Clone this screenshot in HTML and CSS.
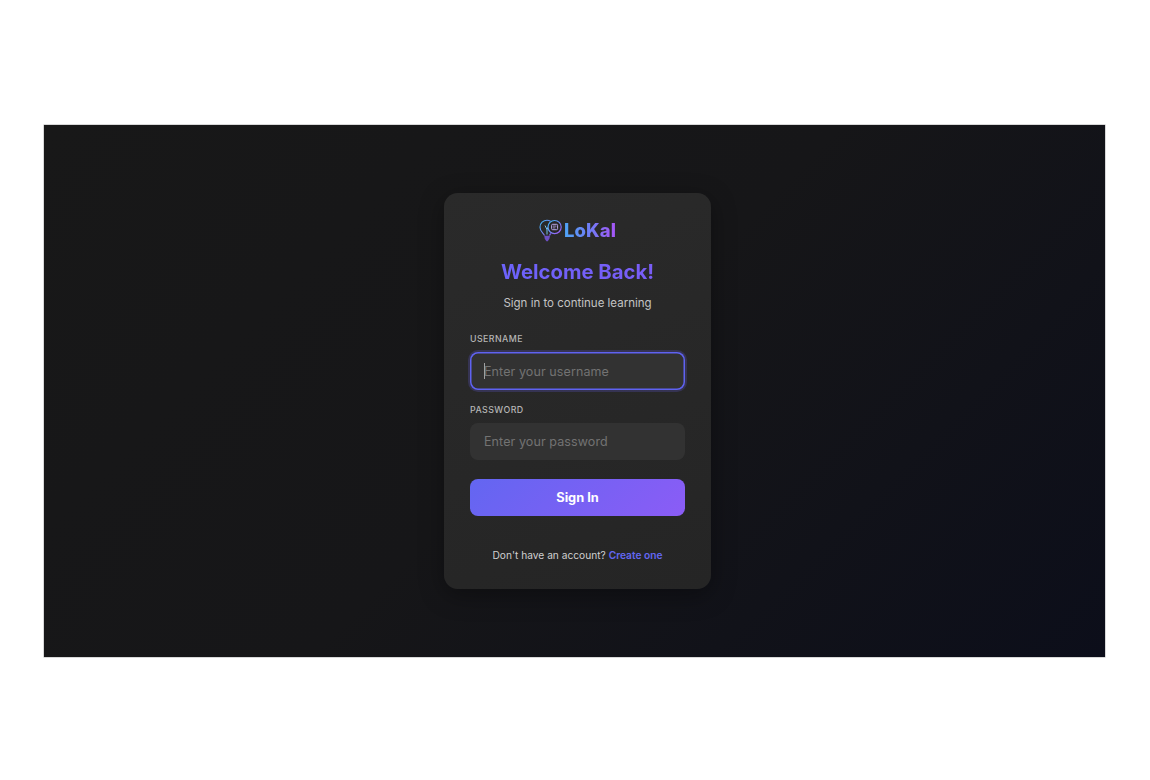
FILE: index.html
```html
<!DOCTYPE html>
<html lang="en">
<head>
<meta charset="utf-8">
<title>LoKal - Sign In</title>
<link rel="stylesheet" href="styles.css">
</head>
<body>
<main class="stage">
  <section class="card">
    <div class="logo">
      <svg class="logo-icon" width="24" height="24" viewBox="0 0 24 24" fill="none" aria-hidden="true">
        <defs>
          <linearGradient id="lg" x1="0" y1="0" x2="1" y2="1">
            <stop offset="0" stop-color="#38bdf8"/>
            <stop offset="1" stop-color="#a855f7"/>
          </linearGradient>
        </defs>
        <path d="M5.5 16.5 C4.6 14 1 13 1 8.2 C1 4.2 4.2 1.2 8 1.2 C9.4 1.2 10.6 1.6 11.6 2.2" stroke="url(#lg)" stroke-width="1.1"/>
        <path d="M10.6 16.5 C10.8 15.7 11.2 15.1 11.8 14.5" stroke="#8b5cf6" stroke-width="1.1"/>
        <path d="M6 6.5 L8 10.5 L10 6.5 M8 10.5 V15.5" stroke="#7dd3fc" stroke-width="0.9"/>
        <path d="M5.2 16.7 H11 L10.4 19.7 L8.8 22.3 H7.4 L5.8 19.7 Z" fill="#6d4fc4"/>
        <circle cx="15.6" cy="8.1" r="6.6" fill="#262626" stroke="url(#lg)" stroke-width="1.2"/>
        <rect x="12.6" y="5.3" width="6" height="5.4" rx="1" stroke="#b9a6e8" stroke-width="1"/>
        <path d="M13.8 7.1 H17.4 M13.8 8.9 H16.4" stroke="#b9a6e8" stroke-width="0.8"/>
      </svg>
      <span class="logo-text">LoKal</span>
    </div>
    <h1 class="title">Welcome Back!</h1>
    <p class="subtitle">Sign in to continue learning</p>
    <form class="form">
      <div class="field">
        <label class="label" for="username">USERNAME</label>
        <div class="input input-focus"><span class="caret"></span><span class="placeholder">Enter your username</span></div>
      </div>
      <div class="field">
        <label class="label" for="password">PASSWORD</label>
        <div class="input"><span class="placeholder">Enter your password</span></div>
      </div>
      <button class="submit" type="button">Sign In</button>
    </form>
    <p class="footer">Don't have an account? <a class="link" href="#">Create one</a></p>
  </section>
</main>
</body>
</html>
```

FILE: styles.css
```css
* { box-sizing: border-box; }
html, body { margin: 0; height: 100%; background: #fff; }
body {
  display: flex;
  align-items: flex-start;
  justify-content: flex-start;
  padding: 125px 0 0 44px;
  font-family: Inter, "Liberation Sans", sans-serif;
}
.stage {
  width: 1061px;
  height: 532px;
  display: flex;
  justify-content: center;
  align-items: flex-start;
  padding: 68px 0 0 6px;
  background: linear-gradient(135deg, #181818 0%, #161618 50%, #0c0e1a 100%);
  box-shadow: 0 0 0 0.5px #b0b0b0;
}
.card {
  width: 267px;
  height: 396px;
  padding: 26px 26px 0;
  border-radius: 14px;
  background: linear-gradient(160deg, #2a2a2a, #252525);
  box-shadow: 0 6px 24px rgba(0, 0, 0, 0.35);
  display: flex;
  flex-direction: column;
  align-items: stretch;
  text-align: center;
}
.logo {
  display: flex;
  justify-content: center;
  align-items: flex-start;
  gap: 1px;
  height: 24px;
}
.logo-icon { flex: none; }
.logo-text {
  font-family: Inter, sans-serif;
  font-weight: 800;
  font-size: 18.5px;
  letter-spacing: 0.1px;
  line-height: 22px;
  background: linear-gradient(90deg, #4ea5f5 0%, #6f7cf6 50%, #a855f7 100%);
  -webkit-background-clip: text;
  background-clip: text;
  color: transparent;
}
.title {
  margin: 17px 0 0;
  font-size: 20.3px;
  line-height: 24px;
  font-weight: 700;
  color: #6c63ff;
  background: linear-gradient(90deg, #6a64fb, #7c5cf5);
  -webkit-background-clip: text;
  background-clip: text;
  -webkit-text-fill-color: transparent;
}
.subtitle {
  margin: 10px 0 0;
  font-size: 11.5px;
  line-height: 18px;
  color: #c4c4c4;
}
.form {
  margin-top: 21px;
  display: flex;
  flex-direction: column;
  text-align: left;
}
.field { display: flex; flex-direction: column; margin-bottom: 13px; }
.field + .field { margin-top: 1px; }
.label {
  font-size: 8.8px;
  line-height: 12px;
  font-weight: 500;
  letter-spacing: 0.45px;
  color: #b5b5b5;
  margin-bottom: 7px;
}
.input {
  position: relative;
  height: 38px;
  padding: 0 14px;
  display: flex;
  align-items: center;
  border-radius: 8px;
  background: #323232;
}
.field + .field .input { height: 37px; }
.input-focus {
  box-shadow: inset 0 0 0 1.5px #5f62f2, 0 0 0 2px rgba(108, 99, 255, 0.2);
}
.caret {
  position: absolute;
  left: 13.5px;
  top: 11px;
  width: 1px;
  height: 16px;
  background: #a0a0a0;
}
.placeholder {
  font-size: 12.5px;
  letter-spacing: 0.1px;
  color: #737373;
}
.submit {
  margin-top: 6px;
  height: 37px;
  padding: 0 0 1px;
  border: 0;
  border-radius: 8px;
  background: linear-gradient(135deg, #6366f1 0%, #8b5cf6 100%);
  color: #fff;
  font-family: inherit;
  font-size: 12.8px;
  font-weight: 700;
}
.footer {
  margin: 31px 0 0;
  font-size: 10.2px;
  line-height: 16px;
  color: #d0d0d0;
}
.link {
  color: #6366f1;
  font-weight: 600;
  text-decoration: none;
}
```
